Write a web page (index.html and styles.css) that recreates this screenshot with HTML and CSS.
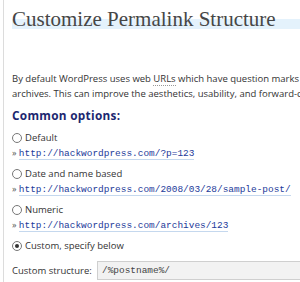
FILE: index.html
```html
<!DOCTYPE html>
<html>
<head>
<meta charset="utf-8">
<link rel="stylesheet" href="styles.css">
</head>
<body>
<div class="wrap">
  <h2 class="title"><span class="hl">Customize Permalink Structure</span></h2>
  <p class="intro">By default WordPress uses web <abbr>URLs</abbr> which have question marks and lots of numbers in them, however WordPress offers you the ability to create a custom URL structure for your permalinks and<br>archives. This can improve the aesthetics, usability, and forward-compatibility of your links.</p>
  <h3 class="sub">Common options:</h3>
  <div class="opt">
    <label class="lbl"><span class="radio"></span>Default</label>
    <div class="ex">» <code>http://hackwordpress.com/?p=123</code></div>
  </div>
  <div class="opt">
    <label class="lbl"><span class="radio"></span>Date and name based</label>
    <div class="ex">» <code>http://hackwordpress.com/2008/03/28/sample-post/</code></div>
  </div>
  <div class="opt">
    <label class="lbl"><span class="radio"></span>Numeric</label>
    <div class="ex">» <code>http://hackwordpress.com/archives/123</code></div>
  </div>
  <div class="opt">
    <label class="lbl"><span class="radio on"></span>Custom, specify below</label>
  </div>
  <div class="custom">
    <span class="clabel">Custom structure:</span>
    <span class="field">/%postname%/</span>
  </div>
</div>
</body>
</html>
```

FILE: styles.css
```css
html, body { margin: 0; padding: 0; background: #fff; }
body { width: 300px; height: 282px; overflow: hidden; }
.wrap {
  margin-left: 3px;
  border-left: 1px solid #dcdcdc;
  padding-left: 8px;
  height: 282px;
  overflow: hidden;
  font-family: "Open Sans", "DejaVu Sans", sans-serif;
  font-size: 9.5px;
  color: #333;
  white-space: nowrap;
}
.title {
  margin: 0;
  padding-top: 7px;
  font-family: "Liberation Serif", serif;
  font-weight: normal;
  font-size: 21px;
  line-height: 24px;
  color: #464646;
}
.hl {
  display: block;
  background: linear-gradient(to bottom, transparent 50%, #e4f2fc 50%, #e4f2fc 92%, transparent 92%);
}
.intro {
  margin: 40px 0 0;
  line-height: 15px;
}
abbr { text-decoration: none; border-bottom: 1px dotted #999; }
.sub {
  margin: 6px 0 8px;
  font-size: 11.8px;
  font-weight: bold;
  color: #1c2770;
  letter-spacing: 0.3px;
  line-height: 16px;
}
.opt { margin-top: 6px; }
.opt:first-of-type { margin-top: 0; }
.lbl { display: flex; align-items: center; line-height: 14px; }
.radio {
  width: 8px; height: 8px;
  border: 1px solid #777;
  border-radius: 50%;
  margin-right: 3px;
  background: #fff;
  position: relative;
}
.radio.on::after {
  content: "";
  position: absolute;
  left: 2px; top: 2px;
  width: 4px; height: 4px;
  border-radius: 50%;
  background: #333;
}
.ex {
  line-height: 15px;
  color: #555;
  font-size: 9px;
}
code {
  font-family: "Liberation Mono", monospace;
  font-size: 9.45px;
  color: #1d3a9a;
  border-bottom: 1px solid #c5d8ee;
}
.custom {
  display: flex;
  align-items: center;
  margin-top: 8px;
}
.clabel { width: 85px; }
.field {
  flex: 1;
  height: 17px;
  line-height: 17px;
  background: #f2f2f2;
  border: 1px solid #cfcfcf;
  border-right: none;
  padding-left: 4px;
  font-family: "Liberation Mono", monospace;
  font-size: 9.45px;
  color: #444;
}
```
